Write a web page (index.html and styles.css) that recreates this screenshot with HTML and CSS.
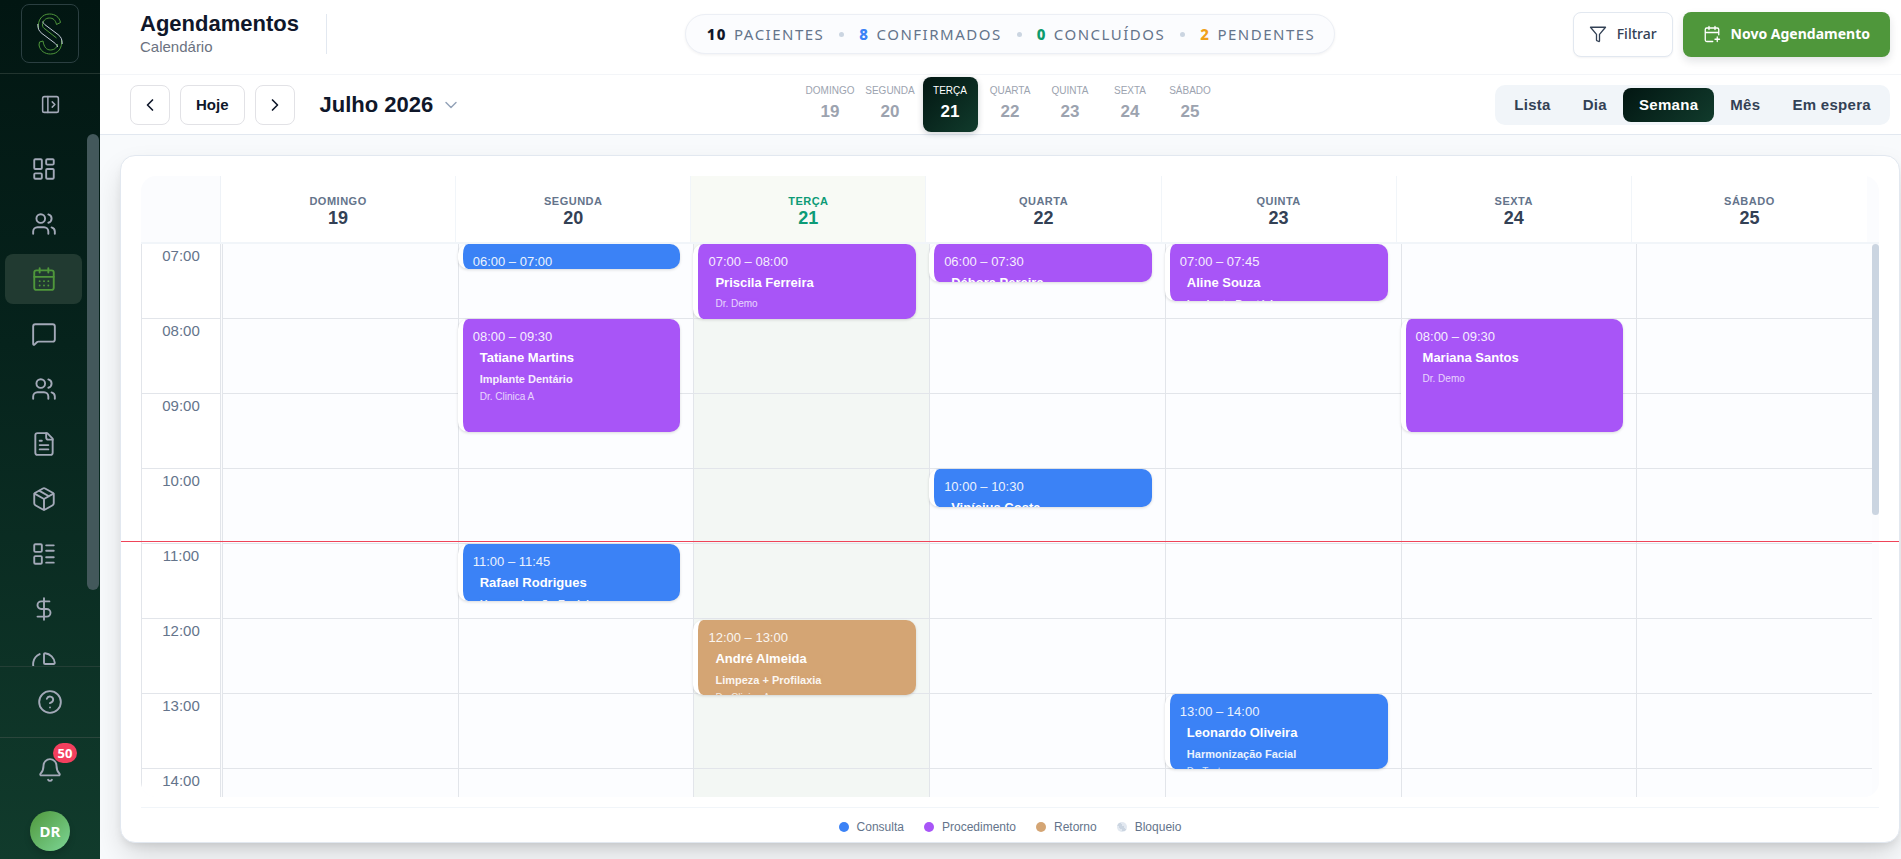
FILE: index.html
```
<!DOCTYPE html>
<html lang="pt-BR">
<head>
<meta charset="utf-8">
<title>Agendamentos</title>
<link rel="stylesheet" href="styles.css">
</head>
<body>
<div class="app">
  <aside class="sidebar">
    <div class="brand">
      <a class="logo" href="#" aria-label="Início">
        <svg width="26" height="42" viewBox="0 0 26 42" fill="none" stroke-width="1">
          <path stroke="#4f973b" d="M1.500 15C.5 7 5 1 12.500 1 18 1 22.500 4 23.500 9.500L19.500 11.500C18.500 7 16 5 12.500 5 8.500 5 5.500 8 5.500 12"/>
          <path stroke="#4f973b" d="M24.500 27C25.500 35 21 41 13.500 41 8 41 3 38 2 32L2.500 29 6 28C7 34 9.500 37 13.500 37 17.500 37 20.500 34 20.500 31"/>
          <path stroke="#c3cbd8" d="M.8 11C.8 16 2 18 5 20.500L17 29.500C19.500 31.500 20.500 32.500 20.500 34"/>
          <path stroke="#c3cbd8" d="M25.200 31C25.200 26 24 24 21 21.500L9 12.500C7 11 6 10 5.800 8.500"/>
          <path stroke="#4f973b" d="M5.500 12C5.500 14 6.500 15 8 16L19.500 25"/>
        </svg>
      </a>
    </div>
    <div class="collapse">
      <button class="icon-btn" aria-label="Expandir menu">
        <svg width="21" height="21" viewBox="0 0 24 24" class="ico"><rect x="3" y="3" width="18" height="18" rx="2"/><path d="M9 3v18M14 9l3 3-3 3"/></svg>
      </button>
    </div>
    <div class="nav-scroll">
      <nav class="nav">
        <a href="#" class="nav-item" aria-label="Painel"><svg width="26" height="26" viewBox="0 0 24 24" class="ico"><rect x="3" y="3" width="7" height="9" rx="1"/><rect x="14" y="3" width="7" height="5" rx="1"/><rect x="14" y="12" width="7" height="9" rx="1"/><rect x="3" y="16" width="7" height="5" rx="1"/></svg></a>
        <a href="#" class="nav-item" aria-label="Pacientes"><svg width="26" height="26" viewBox="0 0 24 24" class="ico"><path d="M16 21v-2a4 4 0 0 0-4-4H6a4 4 0 0 0-4 4v2"/><circle cx="9" cy="7" r="4"/><path d="M22 21v-2a4 4 0 0 0-3-3.870M16 3.130a4 4 0 0 1 0 7.750"/></svg></a>
        <a href="#" class="nav-item active" aria-label="Agendamentos"><svg width="26" height="26" viewBox="0 0 24 24" class="ico"><rect x="3" y="4" width="18" height="18" rx="2"/><path d="M8 2v4M16 2v4M3 10h18M8 14h.01M12 14h.01M16 14h.01M8 18h.01M12 18h.01M16 18h.01"/></svg></a>
        <a href="#" class="nav-item" aria-label="Mensagens"><svg width="26" height="26" viewBox="0 0 24 24" class="ico"><path d="M22 17a2 2 0 0 1-2 2H6.830a2 2 0 0 0-1.420.59l-2.200 2.200A.71.71 0 0 1 2 21.290V5a2 2 0 0 1 2-2h16a2 2 0 0 1 2 2z"/></svg></a>
        <a href="#" class="nav-item" aria-label="Equipe"><svg width="26" height="26" viewBox="0 0 24 24" class="ico"><path d="M16 21v-2a4 4 0 0 0-4-4H6a4 4 0 0 0-4 4v2"/><circle cx="9" cy="7" r="4"/><path d="M22 21v-2a4 4 0 0 0-3-3.870M16 3.130a4 4 0 0 1 0 7.750"/></svg></a>
        <a href="#" class="nav-item" aria-label="Documentos"><svg width="26" height="26" viewBox="0 0 24 24" class="ico"><path d="M15 2H6a2 2 0 0 0-2 2v16a2 2 0 0 0 2 2h12a2 2 0 0 0 2-2V7z"/><path d="M14 2v4a2 2 0 0 0 2 2h4M10 9H8M16 13H8M16 17H8"/></svg></a>
        <a href="#" class="nav-item" aria-label="Estoque"><svg width="26" height="26" viewBox="0 0 24 24" class="ico"><path d="M11 21.730a2 2 0 0 0 2 0l7-4A2 2 0 0 0 21 16V8a2 2 0 0 0-1-1.730l-7-4a2 2 0 0 0-2 0l-7 4A2 2 0 0 0 3 8v8a2 2 0 0 0 1 1.730z"/><path d="M12 22V12M3.300 7l8.700 5 8.700-5M7.500 4.270l9 5.150"/></svg></a>
        <a href="#" class="nav-item" aria-label="Procedimentos"><svg width="26" height="26" viewBox="0 0 24 24" class="ico"><rect x="3" y="3" width="7" height="7" rx="1"/><rect x="3" y="14" width="7" height="7" rx="1"/><path d="M14 4h7M14 9h7M14 15h7M14 20h7"/></svg></a>
        <a href="#" class="nav-item" aria-label="Financeiro"><svg width="26" height="26" viewBox="0 0 24 24" class="ico"><path d="M12 2v20M17 5H9.500a3.500 3.500 0 0 0 0 7h5a3.500 3.500 0 0 1 0 7H6"/></svg></a>
        <a href="#" class="nav-item" aria-label="Relatórios"><svg width="26" height="26" viewBox="0 0 24 24" class="ico"><path d="M21 12c.55 0 1-.45.95-1a10 10 0 0 0-8.950-8.950c-.55-.05-1 .4-1 .95v8a1 1 0 0 0 1 1z"/><path d="M21.210 15.890A10 10 0 1 1 8 2.830"/></svg></a>
      </nav>
      <div class="nav-track"><div class="nav-thumb"></div></div>
    </div>
    <div class="help">
      <button class="icon-btn" aria-label="Ajuda">
        <svg width="26" height="26" viewBox="0 0 24 24" class="ico"><circle cx="12" cy="12" r="10"/><path d="M9.090 9a3 3 0 0 1 5.830 1c0 2-3 3-3 3M12 17h.01"/></svg>
      </button>
    </div>
    <div class="account">
      <button class="icon-btn bell" aria-label="Notificações">
        <svg width="26" height="26" viewBox="0 0 24 24" class="ico"><path d="M10.270 21a2 2 0 0 0 3.460 0M3.260 15.330A1 1 0 0 0 4 17h16a1 1 0 0 0 .74-1.670C19.410 13.960 18 12.500 18 8A6 6 0 0 0 6 8c0 4.500-1.410 5.960-2.740 7.330"/></svg>
        <span class="badge">50</span>
      </button>
      <button class="avatar">DR</button>
    </div>
  </aside>

  <div class="page">
    <header class="header">
      <div class="heading">
        <div>
          <h1 class="title">Agendamentos</h1>
          <p class="subtitle">Calendário</p>
        </div>
        <span class="divider"></span>
      </div>
      <div class="stats">
        <span class="stat"><b>10</b> PACIENTES</span>
        <i class="dot"></i>
        <span class="stat"><b class="blue">8</b> CONFIRMADOS</span>
        <i class="dot"></i>
        <span class="stat"><b class="green">0</b> CONCLUÍDOS</span>
        <i class="dot"></i>
        <span class="stat"><b class="amber">2</b> PENDENTES</span>
      </div>
      <div class="actions">
        <button class="btn filter">
          <svg width="18" height="18" viewBox="0 0 24 24" class="ico"><path d="M22 3H2l8 9.460V20a1 1 0 0 0 .5.870l2.500 1.130a.7.7 0 0 0 1-.6v-8.940z"/></svg>
          Filtrar
        </button>
        <button class="btn primary">
          <svg width="18" height="18" viewBox="0 0 24 24" class="ico"><path d="M8 2v4M16 2v4M21 13V6a2 2 0 0 0-2-2H5a2 2 0 0 0-2 2v14a2 2 0 0 0 2 2h8M3 10h18M16 19h6M19 16v6"/></svg>
          Novo Agendamento
        </button>
      </div>
    </header>

    <div class="toolbar">
      <div class="period">
        <button class="sq" aria-label="Anterior"><svg width="20" height="20" viewBox="0 0 24 24" class="ico bold"><path d="M15 18l-6-6 6-6"/></svg></button>
        <button class="sq today">Hoje</button>
        <button class="sq" aria-label="Próximo"><svg width="20" height="20" viewBox="0 0 24 24" class="ico bold"><path d="M9 18l6-6-6-6"/></svg></button>
        <button class="month">Julho 2026 <svg width="20" height="20" viewBox="0 0 24 24" class="ico"><path d="M6 9l6 6 6-6"/></svg></button>
      </div>
      <div class="strip">
        <button class="day"><span>DOMINGO</span><b>19</b></button>
        <button class="day"><span>SEGUNDA</span><b>20</b></button>
        <button class="day selected"><span>TERÇA</span><b>21</b></button>
        <button class="day"><span>QUARTA</span><b>22</b></button>
        <button class="day"><span>QUINTA</span><b>23</b></button>
        <button class="day"><span>SEXTA</span><b>24</b></button>
        <button class="day"><span>SÁBADO</span><b>25</b></button>
      </div>
      <div class="views">
        <button class="view">Lista</button>
        <button class="view">Dia</button>
        <button class="view on">Semana</button>
        <button class="view">Mês</button>
        <button class="view">Em espera</button>
      </div>
    </div>

    <main class="main">
      <section class="card">
        <div class="calendar">
          <div class="cal-head">
            <div class="corner"></div>
            <div class="col-head"><span>DOMINGO</span><b>19</b></div>
            <div class="col-head"><span>SEGUNDA</span><b>20</b></div>
            <div class="col-head now"><span>TERÇA</span><b>21</b></div>
            <div class="col-head"><span>QUARTA</span><b>22</b></div>
            <div class="col-head"><span>QUINTA</span><b>23</b></div>
            <div class="col-head"><span>SEXTA</span><b>24</b></div>
            <div class="col-head"><span>SÁBADO</span><b>25</b></div>
          </div>
          <div class="cal-body">
            <div class="hours">
              <div>07:00</div><div>08:00</div><div>09:00</div><div>10:00</div><div>11:00</div><div>12:00</div><div>13:00</div><div>14:00</div>
            </div>
            <div class="col"></div>
            <div class="col">
              <article class="event consulta" style="top:0;height:25px"><time>06:00 – 07:00</time></article>
              <article class="event procedimento" style="top:75px;height:113px"><time>08:00 – 09:30</time><h3>Tatiane Martins</h3><div class="info"><strong>Implante Dentário</strong><small>Dr. Clinica A</small></div></article>
              <article class="event consulta" style="top:300px;height:57px"><time>11:00 – 11:45</time><h3>Rafael Rodrigues</h3><div class="info"><strong>Harmonização Facial</strong></div></article>
            </div>
            <div class="col now">
              <article class="event procedimento" style="top:0;height:75px"><time>07:00 – 08:00</time><h3>Priscila Ferreira</h3><div class="info"><small>Dr. Demo</small></div></article>
              <article class="event retorno" style="top:376px;height:75px"><time>12:00 – 13:00</time><h3>André Almeida</h3><div class="info"><strong>Limpeza + Profilaxia</strong><small>Dr. Clinica A</small></div></article>
            </div>
            <div class="col">
              <article class="event procedimento" style="top:0;height:38px"><time>06:00 – 07:30</time><h3>Débora Pereira</h3></article>
              <article class="event consulta" style="top:225px;height:38px"><time>10:00 – 10:30</time><h3>Vinícius Costa</h3></article>
            </div>
            <div class="col">
              <article class="event procedimento" style="top:0;height:57px"><time>07:00 – 07:45</time><h3>Aline Souza</h3><div class="info"><strong>Implante Dentário</strong></div></article>
              <article class="event consulta" style="top:450px;height:75px"><time>13:00 – 14:00</time><h3>Leonardo Oliveira</h3><div class="info"><strong>Harmonização Facial</strong><small>Dr. Teste</small></div></article>
            </div>
            <div class="col">
              <article class="event procedimento" style="top:75px;height:113px"><time>08:00 – 09:30</time><h3>Mariana Santos</h3><div class="info"><small>Dr. Demo</small></div></article>
            </div>
            <div class="col"></div>
            <div class="track"><div class="thumb"></div></div>
          </div>
        </div>
        <footer class="legend">
          <span class="key"><i class="consulta"></i>Consulta</span>
          <span class="key"><i class="procedimento"></i>Procedimento</span>
          <span class="key"><i class="retorno"></i>Retorno</span>
          <span class="key"><i class="bloqueio"></i>Bloqueio</span>
        </footer>
        <div class="now-line" style="top:385px"></div>
      </section>
    </main>
  </div>
</div>
</body>
</html>
```
FILE: styles.css
```
*, *::before, *::after { box-sizing: border-box; }
body { margin: 0; font-family: "Liberation Sans", Arial, sans-serif; color: #0f172a; }
button { font: inherit; color: inherit; background: none; border: 0; padding: 0; cursor: pointer; }
h1, h3, p { margin: 0; }
svg { display: block; flex: none; }
.ico { fill: none; stroke: currentColor; stroke-width: 1.75; stroke-linecap: round; stroke-linejoin: round; }
.ico.bold { stroke-width: 2; }
.app { display: flex; height: 100vh; overflow: hidden; }

/* Sidebar */
.sidebar { flex: none; width: 100px; display: flex; flex-direction: column; color: #a3a9b8; background: linear-gradient(180deg, #021612, #06231c 40%, #113b2c); }
.brand { display: flex; justify-content: center; padding: 4px 0 10px; border-bottom: 1px solid #22352f; }
.logo { width: 58px; height: 59px; display: flex; align-items: center; justify-content: center; border: 1px solid #2b3f41; border-radius: 8px; }
.collapse { height: 60px; display: flex; align-items: center; justify-content: center; }
.nav-scroll { flex: 1; min-height: 0; display: flex; overflow: hidden; }
.nav { flex: 1; display: flex; flex-direction: column; gap: 5px; padding: 10px 5px 0; }
.nav-item { flex: none; height: 50px; display: flex; align-items: center; justify-content: center; color: inherit; border-radius: 8px; }
.nav-item.active { color: #4f973b; background: #213a31; }
.nav-track { width: 13px; padding-right: 1px; }
.nav-thumb { height: 456px; border-radius: 6px; background: #43585b; }
.help { height: 71px; display: flex; align-items: center; justify-content: center; border-top: 1px solid #243f36; }
.account { display: flex; flex-direction: column; align-items: center; gap: 28px; padding: 19px 0 8px; border-top: 1px solid #2b463c; }
.bell { position: relative; }
.badge { position: absolute; left: 16px; top: -14px; width: 24px; height: 20px; border-radius: 10px; background: #f43f5e; color: #fff; font: bold 13px/20px "Noto Sans", sans-serif; text-align: center; }
.avatar { width: 40px; height: 40px; border-radius: 50%; background: linear-gradient(135deg, #4f973b, #7dd696); color: #fff; font: bold 15px/40px "Noto Sans", sans-serif; box-shadow: 0 4px 6px rgba(0, 0, 0, .15); }

/* Header */
.page { flex: 1; min-width: 0; display: flex; flex-direction: column; background: #f8fafc; }
.header, .toolbar { flex: none; display: grid; grid-template-columns: 1fr auto 1fr; align-items: center; padding: 0 11px 0 30px; background: #fff; }
.header { height: 75px; padding-bottom: 6px; border-bottom: 1px solid #f3f5f8; }
.heading { display: flex; align-items: center; gap: 27px; padding-left: 10px; }
.title { font-size: 22px; line-height: 26px; }
.subtitle { font-size: 15px; line-height: 20px; color: #6b7280; }
.divider { width: 1px; height: 40px; background: #e2e8f0; }
.stats { display: flex; align-items: center; gap: 15px; height: 40px; padding: 0 19px 0 21px; border: 1px solid #eceff5; border-radius: 20px; background: #fbfcfe; box-shadow: 0 1px 3px rgba(15, 23, 42, .06); font: 15px/20px "Noto Sans", sans-serif; letter-spacing: 1.5px; color: #64748b; }
.stat { display: flex; gap: 7px; }
.stat b { color: #0f172a; font-weight: 800; }
.stat .blue { color: #3b82f6; }
.stat .green { color: #0d9b6c; }
.stat .amber { color: #f0a019; }
.dot { width: 5px; height: 5px; border-radius: 50%; background: #cbd5e1; }
.actions { display: flex; justify-content: flex-end; gap: 10px; }
.btn { height: 45px; display: flex; align-items: center; gap: 10px; border-radius: 8px; font: 14px/20px "Noto Sans", sans-serif; }
.filter { padding: 0 15px; border: 1px solid #e2e8f0; background: #fff; color: #334155; font-weight: 500; box-shadow: 0 1px 2px rgba(15, 23, 42, .05); }
.primary { padding: 0 20px; background: #4f973b; color: #fff; font-weight: 700; box-shadow: 0 4px 8px rgba(15, 23, 42, .12); }

/* Toolbar */
.toolbar { height: 60px; border-bottom: 1px solid #e2e8f0; }
.period { display: flex; align-items: center; gap: 10px; }
.sq { height: 40px; min-width: 40px; display: flex; align-items: center; justify-content: center; border: 1px solid #e2e2e6; border-radius: 8px; }
.today { padding: 0 15px; font-size: 15px; font-weight: bold; }
.month { display: flex; align-items: center; gap: 8px; margin-left: 15px; font-size: 22px; font-weight: bold; }
.month svg { color: #94a3b8; }
.strip { display: flex; gap: 5px; }
.day { width: 55px; height: 55px; display: flex; flex-direction: column; align-items: center; justify-content: center; gap: 4px; padding-bottom: 3px; border-radius: 8px; color: #9ca3af; }
.day span { font-size: 10px; line-height: 14px; }
.day b { font-size: 17px; line-height: 20px; }
.day.selected { color: #fff; background: linear-gradient(135deg, #021612, #113b2c); box-shadow: 0 2px 6px rgba(15, 23, 42, .2); }
.views { justify-self: end; display: flex; height: 40px; padding: 3px; border-radius: 10px; background: #f1f5f9; }
.view { padding: 0 16px; border-radius: 8px; font-size: 15px; font-weight: bold; letter-spacing: .02em; color: #334155; }
.view.on { color: #fff; background: linear-gradient(135deg, #021612, #113b2c); }

/* Calendar card */
.main { flex: 1; min-height: 0; display: flex; padding: 20px 1px 16px 20px; overflow: hidden; }
.card { position: relative; flex: 1; min-width: 0; display: flex; flex-direction: column; padding: 20px 20px 0; border: 1px solid #e2e8f0; border-radius: 15px; background: #fff; box-shadow: 0 14px 30px -4px rgba(0, 0, 0, .16), 0 5px 10px -3px rgba(0, 0, 0, .1); }
.calendar { flex: 1; min-height: 0; display: flex; flex-direction: column; overflow: hidden; border-radius: 15px; background: #fbfcfe; }
.cal-head { display: grid; grid-template-columns: 80px repeat(7, 1fr); flex: none; height: 68px; padding-right: 12px; border-bottom: 2px solid #f1f5f9; }
.corner { border-right: 1px solid #eef2f7; }
.col-head { display: flex; flex-direction: column; align-items: center; padding-top: 18px; background: #fff; border-right: 1px solid #f1f5f9; color: #334155; }
.col-head:last-child { border-right: 0; }
.col-head span { font-size: 11px; line-height: 14px; font-weight: bold; letter-spacing: .5px; color: #64748b; }
.col-head b { font-size: 18px; line-height: 20px; }
.col-head.now { background: #f8faf5; }
.col-head.now, .col-head.now span { color: #0d9b76; }
.cal-body { flex: 1; min-height: 0; display: grid; grid-template-columns: 81px repeat(7, 1fr) 7px; overflow: hidden; }
.hours { height: 600px; margin-right: 1px; background: #fff; border: solid #e2e5ea; border-width: 0 1px; }
.hours div { height: 75px; padding-top: 2px; border-bottom: 1px solid #e2e5ea; font-size: 15px; line-height: 20px; text-align: center; color: #64748b; }
.col { position: relative; height: 600px; border-left: 1px solid #e2e5ea; background: repeating-linear-gradient(transparent 0 74px, #e2e5ea 74px 75px) #fcfdff; }
.col.now { background-color: #f3f7f4; }
.event { position: absolute; left: -1px; right: 13px; padding: 8px 9px 0 10px; overflow: hidden; border-left: 5px solid #fff; border-radius: 10px; color: #fff; box-shadow: 0 1px 3px rgba(0, 0, 0, .14); }
.event time { display: block; font-size: 13px; line-height: 20px; opacity: .9; }
.event h3 { padding-left: 7px; font-size: 13px; line-height: 21px; }
.info { display: flex; flex-direction: column; margin-top: 2px; padding-left: 7px; line-height: 18px; }
.info strong { font-size: 11px; opacity: .9; }
.info small { font-size: 10px; opacity: .75; }
.consulta { background: #3b82f6; }
.procedimento { background: #a855f7; }
.retorno { background: #d4a574; }
.bloqueio { background: linear-gradient(45deg, #e2e8f0 35%, #cbd5e1 35% 60%, #e2e8f0 60%); }
.thumb { height: 271px; border-radius: 4px; background: #cbd5e1; }
.legend { flex: none; display: flex; justify-content: center; gap: 20px; margin-top: 10px; padding: 9px 0 5px; border-top: 1px solid #f1f5f9; font-size: 12px; line-height: 20px; color: #64748b; }
.key { display: flex; align-items: center; gap: 8px; }
.key i { width: 10px; height: 10px; border-radius: 50%; }
.now-line { position: absolute; left: 0; right: 0; height: 1px; background: #ef4459; }
```
